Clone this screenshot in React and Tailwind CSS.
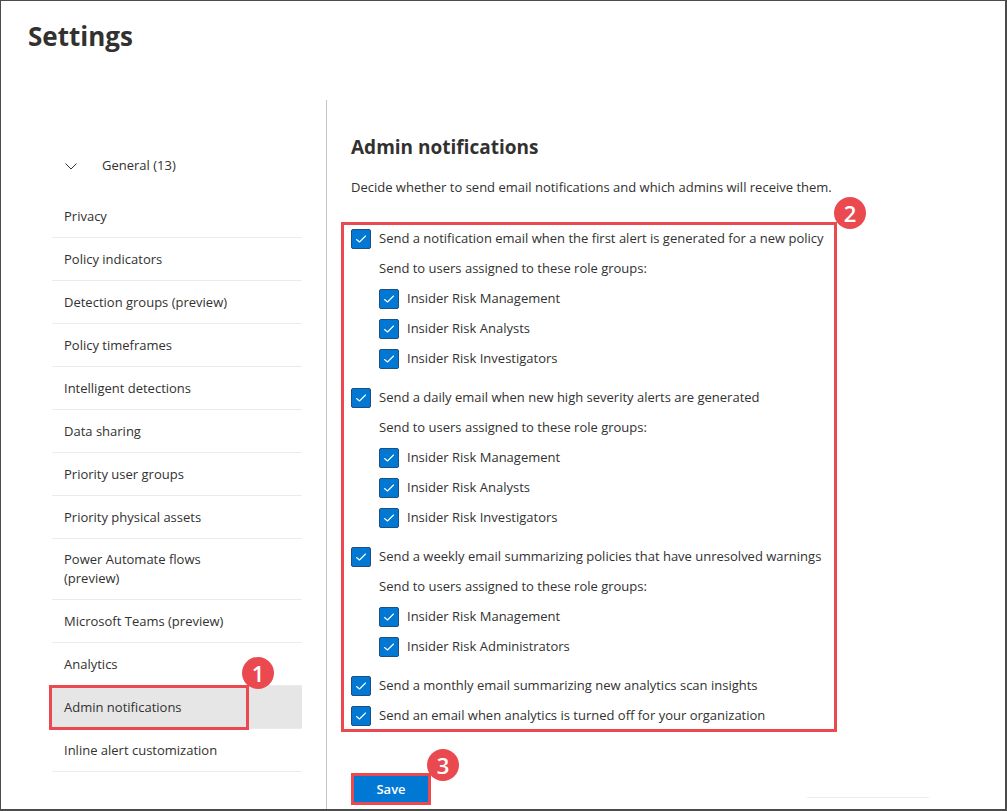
import React from 'react';

const navItems = [
  'Privacy',
  'Policy indicators',
  'Detection groups (preview)',
  'Policy timeframes',
  'Intelligent detections',
  'Data sharing',
  'Priority user groups',
  'Priority physical assets',
  'Power Automate flows (preview)',
  'Microsoft Teams (preview)',
  'Analytics',
  'Admin notifications',
  'Inline alert customization',
];

const groups = [
  {
    label: 'Send a notification email when the first alert is generated for a new policy',
    roles: ['Insider Risk Management', 'Insider Risk Analysts', 'Insider Risk Investigators'],
  },
  {
    label: 'Send a daily email when new high severity alerts are generated',
    roles: ['Insider Risk Management', 'Insider Risk Analysts', 'Insider Risk Investigators'],
  },
  {
    label: 'Send a weekly email summarizing policies that have unresolved warnings',
    roles: ['Insider Risk Management', 'Insider Risk Administrators'],
  },
];

const Checkbox = () => (
  <span className="flex h-[20px] w-[20px] shrink-0 items-center justify-center rounded-[2px] border border-[#1d4f80] bg-[#0078d4]">
    <svg width="14" height="14" viewBox="0 0 14 14" fill="none">
      <path d="M2.5 7.5 L5.5 10 L11.5 4" stroke="white" strokeWidth="1.1" strokeLinecap="round" strokeLinejoin="round" />
    </svg>
  </span>
);

const CheckRow = ({ label, sub }) => (
  <div className={`flex h-[30px] items-center gap-[8px] ${sub ? 'pl-[28px]' : ''}`}>
    <Checkbox />
    <span>{label}</span>
  </div>
);

const Badge = ({ n, className }) => (
  <div className={`absolute flex h-[32px] w-[32px] items-center justify-center rounded-full bg-[#ea4a4f] text-[22px] font-semibold leading-none text-white ${className}`}>
    {n}
  </div>
);

const App = () => {
  return (
    <div
      className="relative box-border flex h-[811px] w-[1007px] flex-col overflow-hidden border-t border-l border-r-2 border-b-2 border-[#4b4b4b] bg-white text-[13px] text-[#323130]"
      style={{ fontFamily: '"Open Sans", "Noto Sans", sans-serif' }}
    >
      <div className="h-[99px] shrink-0 pl-[27px] pt-[17px]">
        <h1 className="text-[26px] font-bold leading-[36px]">Settings</h1>
      </div>

      <div className="flex flex-1">
        <nav className="w-[325px] shrink-0 pl-[51px] pr-[24px] pt-[45px]">
          <div className="mb-[8px] flex h-[42px] items-center pl-[13px]">
            <svg width="12" height="7" viewBox="0 0 12 7" fill="none">
              <path d="M0.5 0.5 L6 6 L11.5 0.5" stroke="#323130" strokeWidth="1" />
            </svg>
            <span className="ml-[25px] font-medium">General (13)</span>
          </div>
          {navItems.map((item) => (
            <div
              key={item}
              className={`relative flex min-h-[43px] items-center border-b border-[#edebe9] px-[12px] py-[11px] leading-[19px] ${
                item === 'Admin notifications' ? 'bg-[#e6e6e6]' : ''
              }`}
            >
              <span className={item.startsWith('Power') ? 'w-[150px]' : ''}>{item}</span>
              {item === 'Admin notifications' && (
                <div className="absolute -left-[3px] -top-[1px] h-[45px] w-[200px] border-[3px] border-[#ea4a4f]" />
              )}
            </div>
          ))}
        </nav>

        <div className="w-px bg-[#c8c6c4]" />

        <main className="flex-1 pl-[24px] pt-[33px]">
          <h2 className="text-[19px] font-bold leading-[28px]">Admin notifications</h2>
          <p className="mt-[16px] leading-[20px]">
            Decide whether to send email notifications and which admins will receive them.
          </p>

          <div className="relative mt-[27px]">
            {groups.map((g) => (
              <div key={g.label} className="mb-[9px]">
                <CheckRow label={g.label} />
                <div className="flex h-[30px] items-center pl-[28px]">Send to users assigned to these role groups:</div>
                {g.roles.map((r) => (
                  <CheckRow key={r} label={r} sub />
                ))}
              </div>
            ))}
            <CheckRow label="Send a monthly email summarizing new analytics scan insights" />
            <CheckRow label="Send an email when analytics is turned off for your organization" />
            <div className="absolute -left-[10px] -bottom-[1px] -top-[2px] w-[496px] border-[3px] border-[#ea4a4f]" />
          </div>

          <button className="mt-[42px] h-[32px] w-[80px] border-[3px] border-[#ea4a4f] bg-[#0078d4] pt-[2px] font-semibold text-white">
            Save
          </button>
        </main>
      </div>

      <div className="absolute left-[806px] top-[796px] h-px w-[122px] bg-[#ececec]" />
      <Badge n="1" className="left-[241px] top-[656px]" />
      <Badge n="2" className="left-[833px] top-[196px]" />
      <Badge n="3" className="left-[426px] top-[748px]" />
    </div>
  );
};

export default App;
